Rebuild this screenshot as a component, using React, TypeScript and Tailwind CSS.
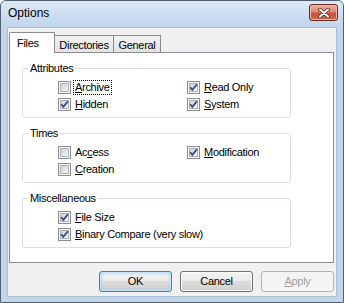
import React from "react";

const font = "font-['Liberation_Sans',Arial,sans-serif]";

function Box({ checked }: { checked: boolean }) {
  return (
    <svg width="13" height="13" viewBox="0 0 13 13" className="shrink-0">
      <defs>
        <linearGradient id="cbg" x1="0" y1="0" x2="1" y2="1">
          <stop offset="0" stopColor="#c9ced6" />
          <stop offset="1" stopColor="#f7f8f9" />
        </linearGradient>
      </defs>
      <rect x="0.5" y="0.5" width="12" height="12" fill="#f4f4f4" stroke="#8e8f8f" />
      <rect x="2.5" y="2.5" width="8" height="8" fill="url(#cbg)" stroke="#aeb3b9" />
      {checked && (
        <path d="M3.2 6.2 L5.4 8.9 L9.9 3.3" fill="none" stroke="#334a86" strokeWidth="1.8" />
      )}
    </svg>
  );
}

function Item({
  checked,
  pre,
  u,
  post,
  focus,
}: {
  checked: boolean;
  pre?: string;
  u: string;
  post: string;
  focus?: boolean;
}) {
  return (
    <div className="flex items-center h-[17px]">
      <Box checked={checked} />
      <span
        className={
          "ml-[3px] leading-[13px] px-[1px] " +
          (focus ? "outline outline-1 outline-dotted outline-[#000]" : "")
        }
      >
        {pre}
        <span className="underline underline-offset-[1px] decoration-1">{u}</span>
        {post}
      </span>
    </div>
  );
}

function Group({ title, children }: { title: string; children: React.ReactNode }) {
  return (
    <fieldset className="ml-[12px] w-[269px] border border-[#d5dfe5] rounded-[3px] min-w-0">
      <legend className="ml-[5px] px-[2px] leading-[13px]">{title}</legend>
      <div className="grid grid-cols-[129px_1fr] pl-[35px] pt-[4px] pb-[4px]">{children}</div>
    </fieldset>
  );
}

function Btn({
  children,
  kind,
}: {
  children: React.ReactNode;
  kind: "default" | "normal" | "disabled";
}) {
  const base =
    "w-[73px] h-[21px] rounded-[3px] border flex items-center justify-center leading-[13px] ";
  if (kind === "default")
    return (
      <div
        className={
          base +
          "border-[#3c7fb1] bg-[linear-gradient(to_bottom,#f2f2f2_0%,#ebebeb_50%,#dddddd_50%,#cfcfcf_100%)] shadow-[inset_0_0_0_1px_#c6e6f9,inset_0_0_3px_1px_#8ccdf0] text-black"
        }
      >
        {children}
      </div>
    );
  if (kind === "normal")
    return (
      <div
        className={
          base +
          "border-[#707070] bg-[linear-gradient(to_bottom,#f2f2f2_0%,#ebebeb_50%,#dddddd_50%,#cfcfcf_100%)] shadow-[inset_0_0_0_1px_#fafafa] text-black"
        }
      >
        {children}
      </div>
    );
  return <div className={base + "border-[#adb2b5] bg-[#f4f4f4] text-[#a0a0a0]"}>{children}</div>;
}

export default function App() {
  return (
    <div
      className={
        font +
        " w-[344px] h-[303px] flex flex-col bg-[#c1d6ed] border border-[#4f5e70] rounded-t-[6px] overflow-hidden text-[11px] tracking-[-0.3px] text-black"
      }
    >
      {/* title bar */}
      <div className="h-[26px] shrink-0 flex justify-between items-start bg-[linear-gradient(to_bottom,#dce8f6,#c0d5ec)]">
        <div className="pl-[7px] pt-[5px] text-[12px] tracking-normal leading-[14px]">Options</div>
        <div className="mt-[3px] mr-[5px] w-[29px] h-[17px] rounded-[3px] border border-[#6e2a20] bg-[linear-gradient(to_bottom,#eab0a3_0%,#dd8a78_45%,#c9533c_55%,#c86a4f_100%)] shadow-[inset_0_0_0_1px_#f0b6a8] flex items-center justify-center">
          <svg width="12" height="10" viewBox="0 0 12 10">
            <path d="M2 1.5 L10 8.5 M10 1.5 L2 8.5" stroke="#5a2018" strokeWidth="3.6" strokeLinecap="round" />
            <path d="M2 1.5 L10 8.5 M10 1.5 L2 8.5" stroke="#ffffff" strokeWidth="2" strokeLinecap="round" />
          </svg>
        </div>
      </div>

      {/* client */}
      <div className="mx-[6px] h-[270px] shrink-0 border border-[#a9bdd3] bg-[#f0f0f0] flex flex-col pl-[1px] pr-[3px]">
        {/* tabs */}
        <div className="mt-[4px] h-[21px] flex items-end -mb-px relative z-10">
          <div className="w-[46px] h-[21px] bg-white border border-b-0 border-[#898c95] rounded-t-[2px] pl-[7px] pt-[4px] leading-[13px]">
            Files
          </div>
          <div className="w-[60px] h-[17px] mb-px border border-b-0 border-[#898c95] bg-[linear-gradient(to_bottom,#f4f4f4,#e3e3e3)] flex justify-center pt-[3px] leading-[13px] -ml-px">
            Directories
          </div>
          <div className="w-[47px] h-[17px] mb-px border border-l-0 border-b-0 border-[#898c95] bg-[linear-gradient(to_bottom,#f4f4f4,#e3e3e3)] flex justify-center pt-[3px] leading-[13px]">
            General
          </div>
        </div>

        {/* panel */}
        <div className="w-[325px] h-[211px] border border-[#898c95] bg-white flex flex-col pt-[9px] gap-[9px]">
          <Group title="Attributes">
            <Item checked={false} u="A" post="rchive" focus />
            <Item checked u="R" post="ead Only" />
            <Item checked u="H" post="idden" />
            <Item checked u="S" post="ystem" />
          </Group>
          <Group title="Times">
            <Item checked={false} pre="Ac" u="c" post="ess" />
            <Item checked u="M" post="odification" />
            <Item checked={false} u="C" post="reation" />
            <div />
          </Group>
          <Group title="Miscellaneous">
            <div className="col-span-2">
              <Item checked u="F" post="ile Size" />
              <Item checked u="B" post="inary Compare (very slow)" />
            </div>
          </Group>
        </div>

        {/* buttons */}
        <div className="mt-[8px] w-[325px] flex justify-end gap-[8px]">
          <Btn kind="default">OK</Btn>
          <Btn kind="normal">Cancel</Btn>
          <Btn kind="disabled">
            <span className="underline underline-offset-[1px]">A</span>pply
          </Btn>
        </div>
      </div>
    </div>
  );
}
